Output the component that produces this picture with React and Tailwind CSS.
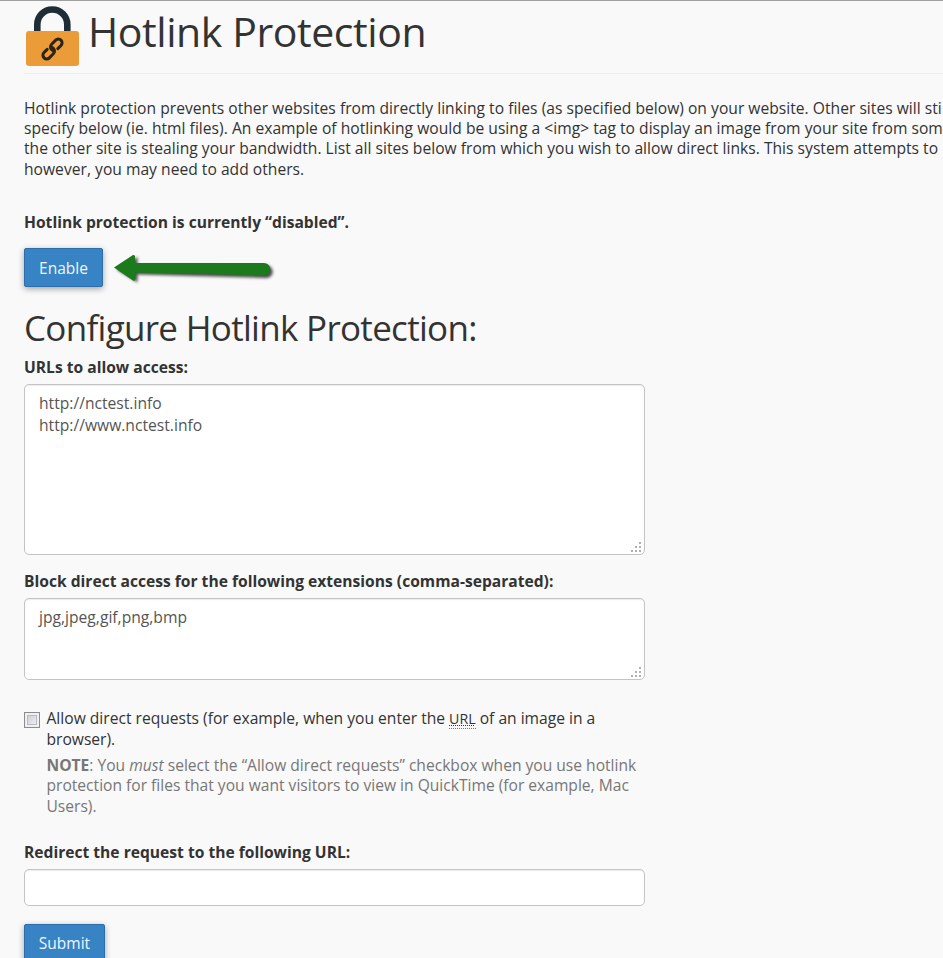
import React, { useState } from "react";

const LockIcon = () => (
  <svg className="mt-[5px] h-[60px] w-[53px] shrink-0" viewBox="0 0 53 60" fill="none">
    <path d="M11.300 27V18.500a15 15 0 0 1 30 0v8.500" stroke="#1f2d36" strokeWidth="6.6" />
    <rect x="0" y="25" width="53" height="35" rx="3" fill="#eb9c39" />
    <g transform="translate(26.5 43) rotate(-45)" stroke="#2b2314" strokeWidth="3" strokeLinecap="round">
      <path d="M-4 -3.500H-8.500a3.500 3.500 0 0 0 0 7.500H-2.800a3.900 3.900 0 0 0 3.900-3.900a3.900 3.900 0 0 0-0.800-2.400" />
      <path d="M4 3.500H8.500a3.500 3.500 0 0 0 0-7.500H2.800a3.900 3.900 0 0 0-3.900 3.900a3.900 3.900 0 0 0 0.800 2.400" />
    </g>
  </svg>
);

const ArrowIcon = () => (
  <svg className="ml-[9px] h-[38px] w-[170px]" viewBox="0 0 170 38">
    <g fill="#111111" opacity="0.75" className="blur-[1.5px]" transform="translate(2.5 2)">
      <path d="M2 18.500L23 6V14L152 14.500a6 6 0 0 1 0 12.500L23 23.500V31.500Z" />
    </g>
    <path d="M2 18.500L21 6Q23.500 5.500 23 8.500V14L152 14a6 6 0 0 1 0 12.500L23 23.500V29.500Q23.500 32.500 21 31.500Z" fill="#1a7a1c" />
  </svg>
);

const ResizeGrip = () => (
  <svg className="pointer-events-none absolute right-[4px] bottom-[3px] h-[10px] w-[10px]" viewBox="0 0 10 10" fill="#b0b0b0">
    <rect x="8" y="0" width="2" height="2" />
    <rect x="4" y="4" width="2" height="2" />
    <rect x="8" y="4" width="2" height="2" />
    <rect x="0" y="8" width="2" height="2" />
    <rect x="4" y="8" width="2" height="2" />
    <rect x="8" y="8" width="2" height="2" />
  </svg>
);

const TextArea = ({ value, onChange, className }) => (
  <div className="relative w-[621px]">
    <textarea
      value={value}
      onChange={(e) => onChange(e.target.value)}
      spellCheck={false}
      className={`block w-full resize-none overflow-hidden rounded-[5px] border border-[#c4c4c4] bg-white px-[14px] py-[7px] text-[15.65px] leading-[22px] text-[#555555] shadow-[inset_0_1px_1px_rgba(0,0,0,0.08)] outline-none ${className}`}
    />
    <ResizeGrip />
  </div>
);

const Button = ({ children, className }) => (
  <button
    type="button"
    className={`h-[39px] shrink-0 rounded-[2px] border border-[#2a6eab] bg-[#3783c4] text-[15.5px] text-[#f0f6fb] shadow-[0_2px_6px_rgba(0,0,0,0.35)] ${className}`}
  >
    {children}
  </button>
);

const App = () => {
  const [urls, setUrls] = useState("http://nctest.info\nhttp://www.nctest.info");
  const [extensions, setExtensions] = useState("jpg,jpeg,gif,png,bmp");
  const [redirect, setRedirect] = useState("");
  const [allowDirect, setAllowDirect] = useState(false);

  return (
    <div className="h-[958px] w-[943px] overflow-hidden border-t border-[#a0a0a0] bg-[#f9f9f9] pl-[24px] font-['Open_Sans',sans-serif] text-[15.62px] leading-[20.4px] text-[#333333]">
      <header className="flex h-[73px] border-b border-[#eeeeee] pl-[2px]">
        <LockIcon />
        <h1 className="ml-[9px] mt-[2px] text-[41px] leading-[56px] tracking-[-0.42px] whitespace-nowrap">Hotlink Protection</h1>
      </header>

      <p className="mt-[23.6px] tracking-[0.02px] whitespace-nowrap">
        Hotlink protection prevents other websites from directly linking to files (as specified below) on your website. Other sites will sti
        <br />
        specify below (ie. html files). An example of hotlinking would be using a &lt;img&gt; tag to display an image from your site from som
        <br />
        the other site is stealing your bandwidth. List all sites below from which you wish to allow direct links. This system attempts to
        <br />
        however, you may need to add others.
      </p>

      <p className="mt-[32.4px] font-bold">Hotlink protection is currently “disabled”.</p>

      <div className="mt-[16px] flex items-center">
        <Button className="w-[79px] pt-px">Enable</Button>
        <ArrowIcon />
      </div>

      <h2 className="mt-[17px] text-[35px] leading-[48px] tracking-[-0.7px] whitespace-nowrap">Configure Hotlink Protection:</h2>

      <label className="mt-[5px] mb-[6.6px] block font-bold">URLs to allow access:</label>
      <TextArea value={urls} onChange={setUrls} className="h-[171px]" />

      <label className="mt-[16px] mb-[6.2px] block font-bold">
        Block direct access for the following extensions (comma-separated):
      </label>
      <TextArea value={extensions} onChange={setExtensions} className="h-[82px]" />

      <div className="mt-[28px] flex">
        <input
          type="checkbox"
          checked={allowDirect}
          onChange={(e) => setAllowDirect(e.target.checked)}
          className="mt-[4px] h-[16px] w-[16px] shrink-0 appearance-none border border-[#8c8c8c] bg-linear-to-br from-[#c4c9ce] to-[#f6f6f6] shadow-[inset_0_0_0_2px_#f0f0f0,inset_0_0_0_3px_#b6bcc2]"
        />
        <div className="ml-[6.5px] whitespace-nowrap">
          <p>
            Allow direct requests (for example, when you enter the{" "}
            <abbr className="border-b border-dotted border-[#777777] text-[14.2px] underline decoration-dotted decoration-1">URL</abbr> of an image in a
            <br />
            browser).
          </p>
          <p className="mt-[5.3px] text-[15.6px] text-[#777777]">
            <strong>NOTE</strong>: You <em>must</em> select the “Allow direct requests” checkbox when you use hotlink
            <br />
            protection for files that you want visitors to view in QuickTime (for example, Mac
            <br />
            Users).
          </p>
        </div>
      </div>

      <label className="mt-[25.9px] mb-[6.9px] block font-bold">Redirect the request to the following URL:</label>
      <input
        type="text"
        value={redirect}
        onChange={(e) => setRedirect(e.target.value)}
        className="block h-[37px] w-[621px] rounded-[5px] border border-[#c4c4c4] bg-white px-[14px] shadow-[inset_0_1px_1px_rgba(0,0,0,0.08)] outline-none"
      />

      <Button className="mt-[17.4px] w-[81px]">Submit</Button>
    </div>
  );
};

export default App;
